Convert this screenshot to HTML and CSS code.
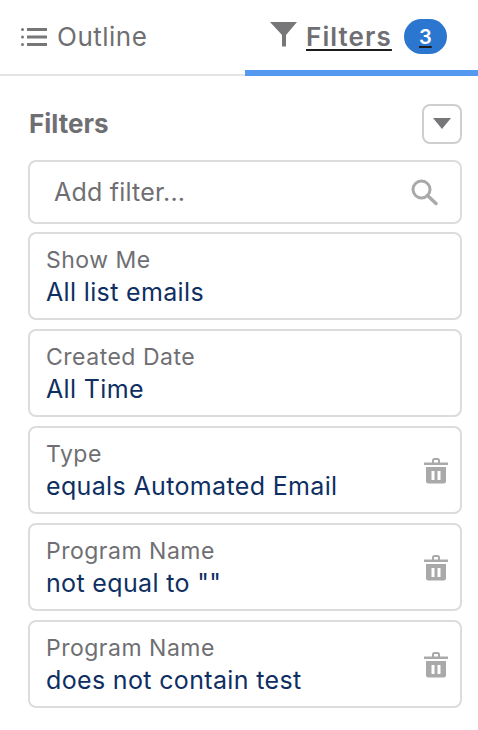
FILE: index.html
```html
<!DOCTYPE html>
<html lang="en">
<head>
<meta charset="utf-8">
<title>Filters</title>
<link rel="stylesheet" href="styles.css">
</head>
<body>
<nav class="tabs">
  <div class="tab tab-outline">
    <svg class="icon-list" width="27" height="20" viewBox="0 0 27 20"><g fill="#77777a"><rect x="0" y="1" width="3" height="3" rx="1.5"/><rect x="0" y="8.5" width="3" height="3" rx="1.5"/><rect x="0" y="16" width="3" height="3" rx="1.5"/><rect x="6" y="1" width="20" height="3"/><rect x="6" y="8.5" width="20" height="3"/><rect x="6" y="16" width="20" height="3"/></g></svg>
    <span class="tab-label">Outline</span>
  </div>
  <div class="tab tab-filters">
    <svg class="icon-funnel" width="27" height="25" viewBox="0 0 27 25"><path d="M0 0H27L16 13V24.500H12V13Z" fill="#77777a"/></svg>
    <span class="tab-label tab-label-active">Filters</span>
    <span class="badge"><span class="badge-num">3</span></span>
  </div>
</nav>
<main class="panel">
  <header class="panel-head">
    <h2 class="panel-title">Filters</h2>
    <button class="collapse" type="button"><span class="caret"></span></button>
  </header>
  <div class="search">
    <span class="search-text">Add filter...</span>
    <svg width="28" height="28" viewBox="0 0 28 28"><circle cx="11.500" cy="11.500" r="8.500" fill="none" stroke="#a9a9a9" stroke-width="3"/><path d="M17.500 17.500L26 25.500" stroke="#a9a9a9" stroke-width="3.400" stroke-linecap="round"/></svg>
  </div>
  <ul class="filters">
    <li class="card"><div class="card-body"><div class="card-label">Show Me</div><div class="card-value">All list emails</div></div></li>
    <li class="card"><div class="card-body"><div class="card-label">Created Date</div><div class="card-value">All Time</div></div></li>
    <li class="card"><div class="card-body"><div class="card-label">Type</div><div class="card-value">equals Automated Email</div></div>
      <svg class="trash" width="24" height="27" viewBox="0 0 24 27"><path d="M0 5.500H24V8H0ZM8 5.500V3.500A2.500 2.500 0 0 1 10.500 1H13.500A2.500 2.500 0 0 1 16 3.500V5.500H14V3.500A.8.8 0 0 0 13.500 3H10.500A.8.8 0 0 0 10 3.500V5.500Z" fill="#a9a9a9"/><path fill-rule="evenodd" d="M2 10H22V24A2.500 2.500 0 0 1 19.500 26.500H4.500A2.500 2.500 0 0 1 2 24ZM7.500 14V23H10.500V14ZM13.500 14V23H16.500V14Z" fill="#a9a9a9"/></svg></li>
    <li class="card"><div class="card-body"><div class="card-label">Program Name</div><div class="card-value">not equal to ""</div></div>
      <svg class="trash" width="24" height="27" viewBox="0 0 24 27"><path d="M0 5.500H24V8H0ZM8 5.500V3.500A2.500 2.500 0 0 1 10.500 1H13.500A2.500 2.500 0 0 1 16 3.500V5.500H14V3.500A.8.8 0 0 0 13.500 3H10.500A.8.8 0 0 0 10 3.500V5.500Z" fill="#a9a9a9"/><path fill-rule="evenodd" d="M2 10H22V24A2.500 2.500 0 0 1 19.500 26.500H4.500A2.500 2.500 0 0 1 2 24ZM7.500 14V23H10.500V14ZM13.500 14V23H16.500V14Z" fill="#a9a9a9"/></svg></li>
    <li class="card"><div class="card-body"><div class="card-label">Program Name</div><div class="card-value">does not contain test</div></div>
      <svg class="trash" width="24" height="27" viewBox="0 0 24 27"><path d="M0 5.500H24V8H0ZM8 5.500V3.500A2.500 2.500 0 0 1 10.500 1H13.500A2.500 2.500 0 0 1 16 3.500V5.500H14V3.500A.8.8 0 0 0 13.500 3H10.500A.8.8 0 0 0 10 3.500V5.500Z" fill="#a9a9a9"/><path fill-rule="evenodd" d="M2 10H22V24A2.500 2.500 0 0 1 19.500 26.500H4.500A2.500 2.500 0 0 1 2 24ZM7.500 14V23H10.500V14ZM13.500 14V23H16.500V14Z" fill="#a9a9a9"/></svg></li>
  </ul>
</main>
</body>
</html>
```
FILE: styles.css
```css
* { box-sizing: border-box; }
html, body { margin: 0; padding: 0; background: #fff; }
body {
  width: 478px;
  height: 730px;
  overflow: hidden;
  font-family: Inter, "Liberation Sans", sans-serif;
  color: #6f6f73;
}
.tabs {
  display: flex;
  height: 76px;
  border-bottom: 2px solid #e4e4e4;
}
.tab {
  display: flex;
  align-items: center;
  height: 76px;
  padding-bottom: 2px;
}
.tab-outline { width: 245px; padding-left: 21px; gap: 9px; }
.tab-filters {
  width: 233px;
  padding-left: 25px;
  padding-bottom: 0;
  border-bottom: 6px solid #5598f0;
}
.tab-label { font-size: 26px; letter-spacing: 0.5px; line-height: 30px; }
.tab-label-active {
  margin-left: 9px;
  margin-top: 3px;
  font-weight: 600;
  letter-spacing: 1.1px;
  text-decoration: underline;
  text-decoration-color: #1c1c1c;
  text-decoration-thickness: 2px;
  text-underline-offset: 3px;
}
.icon-funnel { margin-top: -2px; }
.badge {
  display: flex;
  align-items: center;
  justify-content: center;
  width: 43px;
  height: 35px;
  margin-left: 12px;
  margin-top: 3px;
  border-radius: 18px;
  background: #2b77d0;
}
.badge-num {
  color: #fff;
  font-size: 20px;
  font-weight: 600;
  line-height: 24px;
  text-decoration: underline;
  text-decoration-color: #1c1c1c;
  text-decoration-thickness: 2px;
  text-underline-offset: 2px;
}
.panel { padding: 0 16px 0 28px; }
.panel-head {
  display: flex;
  align-items: center;
  justify-content: space-between;
  height: 84px;
  padding-top: 11px;
}
.panel-title {
  margin: 1px 0 0 1px;
  font-size: 26px;
  font-weight: 700;
  line-height: 30px;
}
.collapse {
  display: flex;
  align-items: center;
  justify-content: center;
  width: 40px;
  height: 40px;
  padding: 0;
  background: #fff;
  border: 2px solid #cfcfcf;
  border-radius: 8px;
}
.caret {
  width: 0;
  height: 0;
  border-left: 9px solid transparent;
  border-right: 9px solid transparent;
  border-top: 11px solid #77777a;
}
.search {
  display: flex;
  align-items: center;
  justify-content: space-between;
  height: 64px;
  padding: 0 22px 0 24px;
  border: 2px solid #dcdcdc;
  border-radius: 8px;
}
.search-text { font-size: 25px; line-height: 30px; letter-spacing: 0.2px; }
.filters {
  display: flex;
  flex-direction: column;
  gap: 9px;
  margin: 8px 0 0;
  padding: 0;
  list-style: none;
}
.card {
  display: flex;
  align-items: center;
  justify-content: space-between;
  height: 88px;
  padding: 0 12px 0 16px;
  border: 2px solid #dcdcdc;
  border-radius: 8px;
}
.card-body { padding-top: 1px; }
.card-label { font-size: 23px; line-height: 31px; letter-spacing: 0.5px; }
.card-value { font-size: 25px; line-height: 32px; letter-spacing: 0.35px; color: #0f2f63; }
.trash { margin-top: 0; }
```
